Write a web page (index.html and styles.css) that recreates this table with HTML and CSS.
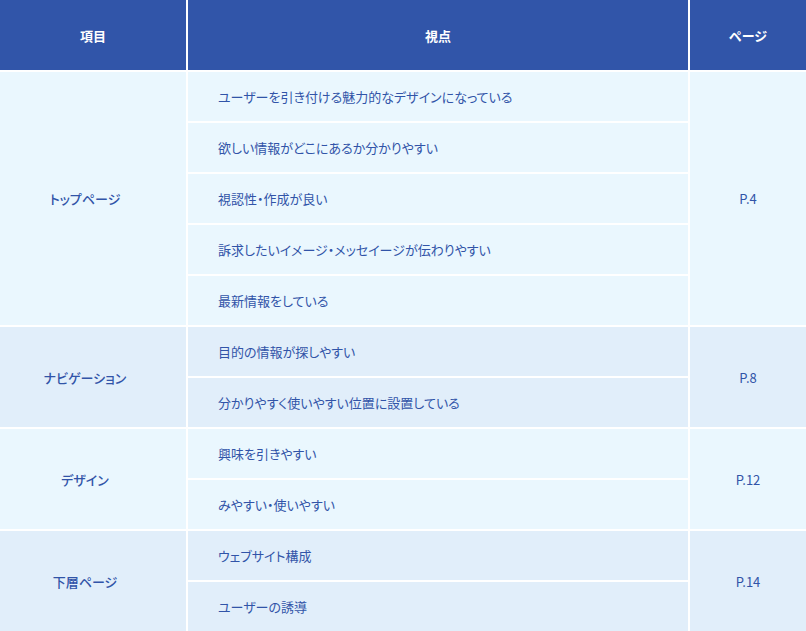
FILE: index.html
```html
<!DOCTYPE html>
<html lang="ja">
<head>
<meta charset="utf-8">
<title>チェック表</title>
<link rel="stylesheet" href="styles.css">
</head>
<body>
<table class="check">
  <thead>
    <tr>
      <th class="col-item">項目</th>
      <th class="col-view">視点</th>
      <th class="col-page">ページ</th>
    </tr>
  </thead>
  <tbody class="grp light">
    <tr><td class="item" rowspan="5">トップページ</td><td class="view">ユーザーを引き付ける魅力的なデザインになっている</td><td class="page" rowspan="5">P.4</td></tr>
    <tr><td class="view">欲しい情報がどこにあるか分かりやすい</td></tr>
    <tr><td class="view">視認性・作成が良い</td></tr>
    <tr><td class="view">訴求したいイメージ・メッセイージが伝わりやすい</td></tr>
    <tr><td class="view">最新情報をしている</td></tr>
  </tbody>
  <tbody class="grp alt">
    <tr><td class="item" rowspan="2">ナビゲーション</td><td class="view">目的の情報が探しやすい</td><td class="page" rowspan="2">P.8</td></tr>
    <tr><td class="view">分かりやすく使いやすい位置に設置している</td></tr>
  </tbody>
  <tbody class="grp light">
    <tr><td class="item" rowspan="2">デザイン</td><td class="view">興味を引きやすい</td><td class="page" rowspan="2">P.12</td></tr>
    <tr><td class="view">みやすい・使いやすい</td></tr>
  </tbody>
  <tbody class="grp alt">
    <tr><td class="item" rowspan="2">下層ページ</td><td class="view">ウェブサイト構成</td><td class="page" rowspan="2">P.14</td></tr>
    <tr><td class="view">ユーザーの誘導</td></tr>
  </tbody>
</table>
</body>
</html>
```
FILE: styles.css
```css
html, body {
  margin: 0;
  padding: 0;
  background: #ffffff;
}
body {
  font-family: "Noto Sans CJK JP", "Noto Sans", sans-serif;
  color: #3154a8;
}
.check {
  width: 806px;
  border-collapse: separate;
  border-spacing: 0;
  table-layout: fixed;
}
.check th,
.check td {
  padding: 0;
  border-right: 2px solid #ffffff;
  border-bottom: 2px solid #ffffff;
  vertical-align: middle;
}
.check th:last-child,
.check td.page {
  border-right: none;
}
.col-item { width: 186px; }
.col-view { width: 500px; }
.check th {
  height: 70px;
  background: #3155a9;
  color: #ffffff;
  font-size: 13px;
  font-weight: 700;
  text-align: center;
}
.check td {
  height: 49px;
  font-size: 13px;
}
.light td { background: #eaf7fe; }
.alt td { background: #e1eefa; }
.item {
  text-align: center;
  font-weight: 500;
  font-feature-settings: "palt";
  padding-right: 16px !important;
}
.view {
  padding-left: 30px !important;
  text-align: left;
  font-feature-settings: "palt";
}
.page {
  text-align: center;
}
```
